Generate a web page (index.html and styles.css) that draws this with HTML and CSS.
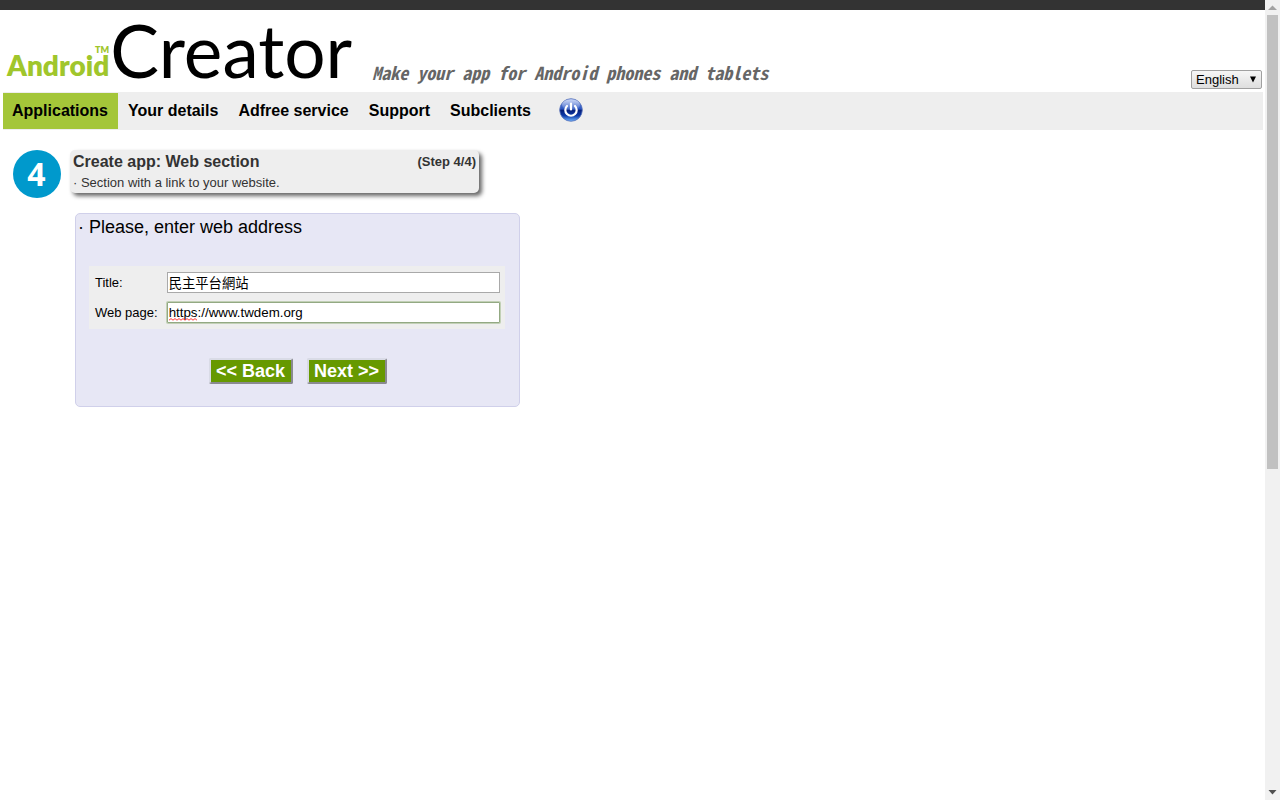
FILE: index.html
```html
<!DOCTYPE html>
<html lang="en">
<head>
<meta charset="utf-8">
<title>Android Creator</title>
<link rel="stylesheet" href="styles.css">
</head>
<body>
<div class="page">
  <div class="topbar"></div>
  <header class="header">
    <a class="logo" href="#">
      <span class="logo-side">
        <span class="logo-tm">TM</span>
        <span class="logo-android">Android</span>
      </span>
      <span class="logo-creator">Creator</span>
    </a>
    <p class="tagline">Make your app for Android phones and tablets</p>
    <div class="language">
      <select class="language-select" aria-label="Language"><option>English</option></select>
      <svg class="language-arrow" width="8" height="7" viewBox="0 0 8 7" aria-hidden="true"><path d="M1 0.5h6L4 6.5z" fill="#000"/></svg>
    </div>
  </header>
  <nav class="nav">
    <a class="nav-link active" href="#">Applications</a>
    <a class="nav-link" href="#">Your details</a>
    <a class="nav-link" href="#">Adfree service</a>
    <a class="nav-link" href="#">Support</a>
    <a class="nav-link" href="#">Subclients</a>
    <a class="power" href="#" aria-label="Log out">
      <svg width="24" height="24" viewBox="0 0 24 24" aria-hidden="true">
        <defs>
          <linearGradient id="orb" x1="0" y1="0" x2="0" y2="1">
            <stop offset="0" stop-color="#7f9ce8"/>
            <stop offset=".45" stop-color="#2a55c0"/>
            <stop offset=".52" stop-color="#06207c"/>
            <stop offset=".75" stop-color="#0d3aa8"/>
            <stop offset="1" stop-color="#6fb4ff"/>
          </linearGradient>
          <linearGradient id="shine" x1="0" y1="0" x2="0" y2="1">
            <stop offset="0" stop-color="#fff" stop-opacity=".6"/>
            <stop offset="1" stop-color="#fff" stop-opacity=".05"/>
          </linearGradient>
        </defs>
        <circle cx="12" cy="12" r="11.3" fill="url(#orb)" stroke="#5570b8" stroke-width=".8"/>
        <ellipse cx="12" cy="6.8" rx="9" ry="5.6" fill="url(#shine)"/>
        <path d="M8 8a5.700 5.700 0 1 0 8 0M12 5.500v6" fill="none" stroke="#fff" stroke-width="2.200" stroke-linecap="round"/>
      </svg>
    </a>
  </nav>
  <main class="main">
    <div class="step">
      <span class="step-number">4</span>
      <section class="step-card">
        <div class="step-head">
          <h1 class="step-title">Create app: Web section</h1>
          <span class="step-count">(Step 4/4)</span>
        </div>
        <p class="step-text">· Section with a link to your website.</p>
      </section>
    </div>
    <form class="panel">
      <h2 class="panel-title">· Please, enter web address</h2>
      <div class="fields">
        <label for="title">Title:</label>
        <div class="control"><input class="field" id="title" type="text" value="民主平台網站"></div>
        <label for="web">Web page:</label>
        <div class="control">
          <input class="field focused" id="web" type="text" value="https://www.twdem.org" spellcheck="false">
          <svg class="squiggle" width="29" height="3" viewBox="0 0 29 3" aria-hidden="true"><path d="M0 2.2L2 .6 4 2.2 6 .6 8 2.2 10 .6 12 2.2 14 .6 16 2.2 18 .6 20 2.2 22 .6 24 2.2 26 .6 28 2.2" fill="none" stroke="#f22" stroke-width=".9"/></svg>
        </div>
      </div>
      <div class="actions">
        <button class="button" type="button">&lt;&lt; Back</button>
        <button class="button" type="button">Next &gt;&gt;</button>
      </div>
    </form>
  </main>
</div>
<div class="scrollbar" aria-hidden="true">
  <svg class="scroll-arrow" width="15" height="15" viewBox="0 0 15 15"><path d="M3 10L7.5 5.5 12 10z" fill="#a3a3a3"/></svg>
  <div class="scroll-track"><div class="scroll-thumb"></div></div>
  <svg class="scroll-arrow" width="15" height="15" viewBox="0 0 15 15"><path d="M3.500 5h8L7.500 9.500z" fill="#505050"/></svg>
</div>
</body>
</html>
```
FILE: styles.css
```css
* { box-sizing: border-box; }
body {
  margin: 0;
  display: flex;
  min-height: 100vh;
  background: #fff;
  color: #000;
  font: 13px/15px "Liberation Sans", "Noto Sans CJK TC", sans-serif;
}
h1, h2, p { margin: 0; }
a { color: inherit; text-decoration: none; }
.page { flex: 1; min-width: 0; }
.topbar { height: 10px; background: #333; }

.header {
  display: flex;
  align-items: flex-end;
  height: 82px;
  padding: 0 3px 3px 7px;
}
.logo {
  display: flex;
  align-items: flex-end;
  gap: 1px;
  margin-bottom: 3px;
  font-family: Lato, sans-serif;
}
.logo-side {
  display: flex;
  flex-direction: column;
  align-items: flex-end;
  margin-bottom: 10px;
  color: #a0c62c;
  font-weight: 800;
}
.logo-android { font-size: 28px; line-height: 22px; }
.logo-tm { font-size: 9px; line-height: 9px; }
.logo-creator { font-size: 73px; line-height: 72px; }
.tagline {
  margin: 0 0 3px 20px;
  color: #666;
  font: italic bold 18px/28px "Noto Sans Mono CJK TC", "Noto Sans Mono CJK SC", "Noto Sans Mono CJK JP", monospace;
}
.language { position: relative; margin-left: auto; }
.language-select {
  display: block;
  appearance: none;
  width: 71px;
  height: 19px;
  padding: 0 4px;
  border: 1px solid #a0a0a0;
  border-radius: 2px;
  background: linear-gradient(#f6f6f6, #dedede);
  color: #000;
  font: 13px/17px "Liberation Sans", sans-serif;
}
.language-arrow { position: absolute; right: 5px; top: 6px; pointer-events: none; }

.nav {
  display: flex;
  align-items: center;
  gap: 1px;
  height: 38px;
  margin: 0 2px 0 3px;
  background: #eee;
}
.nav-link {
  padding: 0 10px 0 9px;
  font-size: 16px;
  font-weight: bold;
  line-height: 36px;
}
.nav-link.active { background: #a4c639; }
.power { display: flex; margin-left: 17px; margin-bottom: 2px; }

.main { padding: 20px 13px; }
.step { display: flex; gap: 9px; }
.step-number {
  width: 48px;
  height: 48px;
  padding-right: 1px;
  border-radius: 50%;
  background: #09c;
  color: #fff;
  font: bold 32px/48px "Open Sans", sans-serif;
  text-align: center;
}
.step-card {
  flex: 0 1 409px;
  align-self: flex-start;
  padding: 2px 3px 0 3px;
  border-radius: 5px;
  background: #eee;
  box-shadow: 3px 3px 4px #666;
  color: #333;
}
.step-head { display: flex; justify-content: space-between; }
.step-title { font-size: 16px; line-height: 20px; }
.step-count { font-weight: bold; line-height: 20px; }
.step-text { line-height: 21px; }

.panel {
  max-width: 445px;
  margin: 15px 0 0 62px;
  padding: 3px 14px 22px 13px;
  border: 1px solid #d0d0ea;
  border-radius: 5px;
  background: #e7e7f5;
}
.panel-title {
  margin-left: -11px;
  font-size: 18px;
  font-weight: normal;
  line-height: 20px;
}
.fields {
  display: grid;
  grid-template-columns: auto 1fr;
  align-items: center;
  gap: 9px;
  margin-top: 29px;
  padding: 6px 5px 6px 6px;
  background: #eee;
}
.control { position: relative; }
.field {
  display: block;
  width: 100%;
  height: 21px;
  padding: 1px;
  border: 1px solid #a9a9a9;
  background: #fff;
  color: #000;
  font: 13.333px "Liberation Sans", "Noto Sans CJK TC", sans-serif;
}
.field.focused { border-color: #93a983; box-shadow: 0 0 0 1px #c2d0b6; border-radius: 1px; }
.squiggle { position: absolute; left: 2px; bottom: 2px; }
.actions {
  display: flex;
  justify-content: center;
  gap: 14px;
  margin-top: 29px;
  padding-left: 2px;
}
.button {
  height: 26px;
  padding: 0 6px 1px 5px;
  border: 2px solid;
  border-color: #d9dbe6 #8a8a90 #8a8a90 #d9dbe6;
  border-radius: 2px;
  background: #690;
  color: #fff;
  font: bold 18px/20px "Liberation Sans", sans-serif;
}

.scrollbar {
  display: flex;
  flex-direction: column;
  flex: 0 0 15px;
  background: #f1f1f1;
}
.scroll-arrow { display: block; }
.scroll-track { flex: 1; display: flex; flex-direction: column; padding: 0 2px; }
.scroll-thumb { flex: 0 0 59%; background: #c1c1c1; }
```
